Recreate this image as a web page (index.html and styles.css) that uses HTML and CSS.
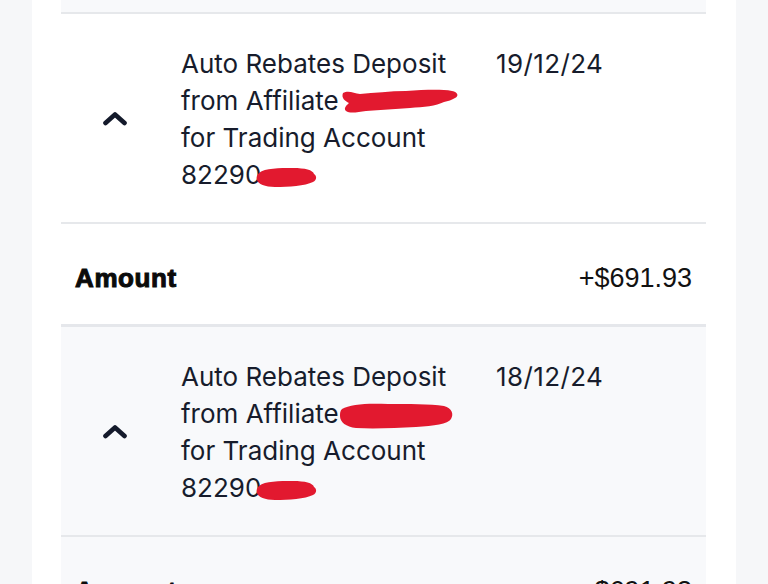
FILE: index.html
```html
<!DOCTYPE html>
<html>
<head>
<meta charset="utf-8">
<link rel="stylesheet" href="styles.css">
</head>
<body>
<div class="page">
  <div class="card">
    <div class="table">
      <div class="row-top"></div>

      <div class="group">
        <div class="desc-row">
          <div class="chev-cell">
            <svg class="chev" width="26" height="16" viewBox="0 0 26 16"><path d="M3.5 13 L13 4.5 L22.5 13" fill="none" stroke="#141a2b" stroke-width="4.6" stroke-linecap="round" stroke-linejoin="round"/></svg>
          </div>
          <div class="desc">
            <div>Auto Rebates Deposit</div>
            <div class="line">from Affiliate <svg class="redact r-long" width="120" height="30" viewBox="0 0 120 30"><path d="M3 6 C8 3 14 6 20 7 C34 6 50 4 66 4 C84 3 100 2 112 4 C118 5 119 9 115 11 C112 13 108 14 104 15 C96 19 84 20 70 21 C56 22 40 23 26 24 C18 25 10 27 6 24 C3 21 7 18 9 16 C5 14 1 11 3 6 Z" fill="#e2192f"/></svg></div>
            <div>for Trading Account</div>
            <div class="line">82290<svg class="redact r-short" width="64" height="24" viewBox="0 0 64 24"><path d="M4 8 C10 3 24 3 38 3 C50 3 58 5 59 9 C62 11 62 15 58 17 C50 21 34 22 20 22 C10 22 3 19 2 15 C1 12 2 10 4 8 Z" fill="#e2192f"/></svg></div>
          </div>
          <div class="date">19/12/24</div>
        </div>
        <div class="amount-row">
          <div class="amount-label">Amount</div>
          <div class="amount-value">+$691.93</div>
        </div>
      </div>

      <div class="group alt">
        <div class="desc-row">
          <div class="chev-cell">
            <svg class="chev" width="26" height="16" viewBox="0 0 26 16"><path d="M3.5 13 L13 4.5 L22.5 13" fill="none" stroke="#141a2b" stroke-width="4.6" stroke-linecap="round" stroke-linejoin="round"/></svg>
          </div>
          <div class="desc">
            <div>Auto Rebates Deposit</div>
            <div class="line">from Affiliate <svg class="redact r-long2" width="118" height="32" viewBox="0 0 118 32"><path d="M4 9 C12 4 30 3 50 4 C70 4 92 4 106 6 C114 8 116 14 113 19 C110 24 96 26 78 27 C58 28 36 29 18 28 C8 27 2 22 2 16 C2 13 2 11 4 9 Z" fill="#e2192f"/></svg></div>
            <div>for Trading Account</div>
            <div class="line">82290<svg class="redact r-short" width="64" height="24" viewBox="0 0 64 24"><path d="M4 8 C10 3 24 3 38 3 C50 3 58 5 59 9 C62 11 62 15 58 17 C50 21 34 22 20 22 C10 22 3 19 2 15 C1 12 2 10 4 8 Z" fill="#e2192f"/></svg></div>
          </div>
          <div class="date">18/12/24</div>
        </div>
        <div class="amount-row">
          <div class="amount-label">Amount</div>
          <div class="amount-value">+$691.93</div>
        </div>
      </div>
    </div>
  </div>
</div>
</body>
</html>
```

FILE: styles.css
```css
* { box-sizing: border-box; }
html, body {
  margin: 0;
  padding: 0;
  background: #f6f7f9;
  height: 584px;
  overflow: hidden;
}
.page {
  padding-left: 32px;
  width: 736px;
  height: 584px;
  overflow: hidden;
}
.card {
  background: #ffffff;
  height: 584px;
  overflow: hidden;
  padding: 0 30px 0 29px;
}
.table {
  font-family: Inter, "Noto Sans", sans-serif;
  color: #171c2c;
}
.row-top {
  height: 14px;
  background: #f8f9fb;
  border-bottom: 2px solid #e6e8eb;
}
.group {
  background: #ffffff;
}
.group.alt {
  background: #f8f9fb;
  border-top: 3px solid #e5e7eb;
}
.desc-row {
  display: grid;
  grid-template-columns: 120px 315px 1fr;
  align-items: center;
  height: 210px;
  border-bottom: 2px solid #e6e8eb;
}
.chev-cell {
  padding-left: 41px;
  display: flex;
  align-items: center;
}
.chev {
  display: block;
}
.desc {
  font-size: 26px;
  line-height: 37px;
  align-self: start;
  padding-top: 31px;
}
.date {
  font-size: 26px;
  line-height: 37px;
  letter-spacing: 0.4px;
  align-self: start;
  padding-top: 31px;
}
.line {
  white-space: nowrap;
}
.redact {
  vertical-align: middle;
}
.r-long { margin-left: -6px; margin-top: -2px; }
.r-short { margin-left: -6px; }
.r-long2 { margin-left: -8px; }
.amount-row {
  display: flex;
  justify-content: space-between;
  align-items: center;
  height: 100px;
  padding: 8px 14px 0 14px;
}
.amount-label {
  font-family: "Liberation Sans", Arial, sans-serif;
  font-weight: 700;
  font-size: 26px;
  letter-spacing: 0.6px;
  color: #0b0b0b;
  -webkit-text-stroke: 1px #0b0b0b;
}
.amount-value {
  font-family: "Liberation Sans", Arial, sans-serif;
  font-size: 27px;
  color: #111111;
}
```
